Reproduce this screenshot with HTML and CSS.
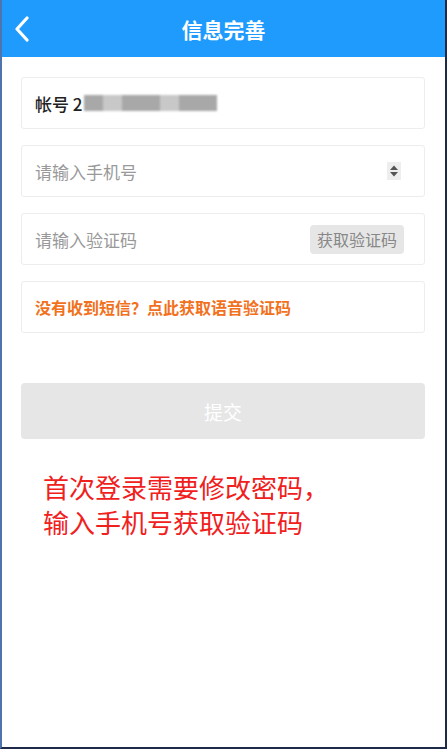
FILE: index.html
```html
<!DOCTYPE html>
<html lang="zh-CN">
<head>
    <meta charset="UTF-8">
    <meta name="viewport" content="width=device-width, initial-scale=1.0">
    <title>信息完善</title>
    <link rel="stylesheet" href="styles.css">
</head>
<body>
    <div class="frame">
        <div class="header">
            <a class="back" href="#">
                <svg width="18" height="26" viewBox="0 0 18 26">
                    <path d="M14 2 L4 13 L14 24" fill="none" stroke="#fff" stroke-width="3.2" stroke-linecap="round" stroke-linejoin="round"/>
                </svg>
            </a>
            <h1>信息完善</h1>
        </div>
        <div class="form">
            <div class="field">
                <span class="account">帐号 2</span>
                <span class="blur">
                    <i></i><i class="light"></i><i></i><i></i><i class="light"></i><i></i><i></i>
                </span>
            </div>
            <div class="field">
                <span class="placeholder">请输入手机号</span>
                <span class="spin">
                    <svg width="10" height="14" viewBox="0 0 10 14">
                        <path d="M1 6 L5 1.5 L9 6 Z M1 8 L5 12.5 L9 8 Z" fill="#555"/>
                    </svg>
                </span>
            </div>
            <div class="field">
                <span class="placeholder">请输入验证码</span>
                <button class="code-btn">获取验证码</button>
            </div>
            <div class="field">
                <a class="voice" href="#">没有收到短信？点此获取语音验证码</a>
            </div>
            <button class="submit">提交</button>
            <p class="notice">首次登录需要修改密码，<br>输入手机号获取验证码</p>
        </div>
    </div>
</body>
</html>
```

FILE: styles.css
```css
body {
    margin: 0;
    font-family: "Noto Sans CJK SC", "Noto Sans", sans-serif;
    background: #fff;
}
.frame {
    height: 747px;
    border-left: 2px solid #4d74ad;
    border-right: 2px solid #1d2b48;
    border-bottom: 2px solid #1d2b48;
    background: #fff;
    display: flex;
    flex-direction: column;
}
.header {
    height: 57px;
    background: #1f9bfd;
    display: flex;
    align-items: center;
    justify-content: center;
    position: relative;
}
.back {
    position: absolute;
    left: 11px;
    top: 16px;
    display: flex;
}
.header h1 {
    margin: 0;
    color: #fff;
    font-size: 21px;
    font-weight: bold;
}
.form {
    padding: 20px 20px 0 19px;
    display: flex;
    flex-direction: column;
}
.field {
    height: 50px;
    border: 1px solid #ededed;
    border-radius: 3px;
    margin-bottom: 16px;
    display: flex;
    align-items: center;
    padding: 0 21px 0 13px;
}
.account {
    font-size: 17px;
    font-weight: 500;
    color: #222;
}
.blur {
    display: flex;
    height: 16px;
    margin-left: 1px;
    filter: blur(1.2px);
}
.blur i {
    width: 19px;
    height: 16px;
    background: #a8a8a8;
}
.blur i.light {
    background: #c8c8c8;
}
.placeholder {
    font-size: 17px;
    color: #999;
    flex: 1;
}
.spin {
    width: 14px;
    height: 18px;
    margin-right: 2px;
    background: #eee;
    display: flex;
    align-items: center;
    justify-content: center;
}
.code-btn {
    margin-right: -1px;
    height: 29px;
    padding: 0 7px;
    border: none;
    border-radius: 4px;
    background: #e6e6e6;
    color: #888;
    font-family: inherit;
    font-size: 16px;
}
.voice {
    color: #f2711c;
    font-size: 16px;
    font-weight: bold;
    text-decoration: none;
}
.submit {
    margin-top: 34px;
    height: 56px;
    border: none;
    border-radius: 4px;
    background: #e6e6e6;
    color: #fff;
    font-family: inherit;
    font-size: 19px;
}
.notice {
    margin: 30px 0 0 22px;
    color: #f0201c;
    font-size: 26px;
    line-height: 35px;
}
```
